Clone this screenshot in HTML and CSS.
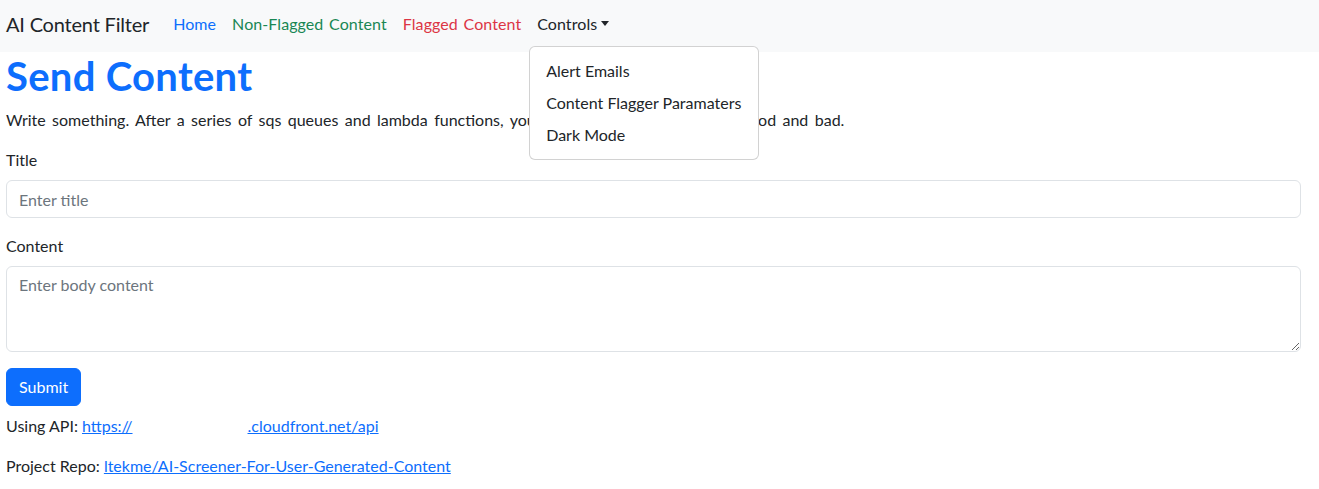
FILE: index.html
```html
<!DOCTYPE html>
<html lang="en">
<head>
<meta charset="utf-8">
<title>AI Content Filter</title>
<link rel="stylesheet" href="styles.css">
</head>
<body>
<nav class="navbar">
  <span class="brand">AI Content Filter</span>
  <ul class="nav">
    <li><a class="nav-link link-home">Home</a></li>
    <li><a class="nav-link link-green">Non-Flagged Content</a></li>
    <li><a class="nav-link link-red">Flagged Content</a></li>
    <li class="dropdown">
      <a class="nav-link link-dark toggle">Controls</a>
      <ul class="menu">
        <li class="menu-item">Alert Emails</li>
        <li class="menu-item">Content Flagger Paramaters</li>
        <li class="menu-item">Dark Mode</li>
      </ul>
    </li>
  </ul>
</nav>
<main class="main">
  <h1 class="title">Send Content</h1>
  <p class="lead">Write something. After a series of sqs queues and lambda functions, your content will be flagged as good and bad.</p>
  <div class="field">
    <label class="label">Title</label>
    <input class="control" type="text" placeholder="Enter title">
  </div>
  <div class="field">
    <label class="label">Content</label>
    <textarea class="control area" rows="3" placeholder="Enter body content"></textarea>
  </div>
  <button class="btn" type="button">Submit</button>
  <p class="info">Using API: <a class="link" href="#">https://<span class="gap"></span>.cloudfront.net/api</a></p>
  <p class="info">Project Repo: <a class="link" href="#">ltekme/AI-Screener-For-User-Generated-Content</a></p>
</main>
</body>
</html>
```
FILE: styles.css
```css
* { box-sizing: border-box; }
body {
  margin: 0;
  font-family: Lato, "Noto Sans", sans-serif;
  font-size: 16px;
  line-height: 24px;
  color: #212529;
  background: #fff;
}
.navbar {
  height: 52px;
  background: #f8f9fa;
  display: flex;
  align-items: center;
  padding: 0 6px 4px;
}
.brand {
  font-size: 20px;
  line-height: 30px;
  margin-right: 16px;
  letter-spacing: -0.2px;
  color: #212529;
}
.nav {
  list-style: none;
  margin: 0;
  padding: 0;
  display: flex;
}
.nav-link {
  display: block;
  padding: 8px;
  text-decoration: none;
  word-spacing: 1.5px;
  letter-spacing: 0.08px;
  cursor: pointer;
}
.link-home { color: #0d6efd; }
.link-green { color: #198754; }
.link-red { color: #dc3545; }
.link-dark { color: #212529; }
.toggle::after {
  content: "";
  display: inline-block;
  margin-left: 4px;
  vertical-align: 4px;
  border-top: 5px solid;
  border-right: 4px solid transparent;
  border-left: 4px solid transparent;
}
.dropdown { position: relative; }
.menu {
  position: absolute;
  top: 42px;
  left: 0;
  width: 230px;
  list-style: none;
  margin: 0;
  padding: 8px 0;
  background: #fff;
  border: 1px solid rgba(0,0,0,.175);
  border-radius: 6px;
  z-index: 10;
}
.menu-item {
  padding: 4px 16px;
  white-space: nowrap;
  color: #212529;
}
.main { padding: 0 18px 0 6px; }
.title {
  margin: 0 0 8px;
  font-size: 40px;
  line-height: 48px;
  font-weight: 700;
  letter-spacing: 0.3px;
  color: #0d6efd;
}
.lead { margin: 0 0 16px; word-spacing: 2.3px; }
.field { margin-bottom: 16px; }
.label { display: block; margin-bottom: 8px; }
.control {
  display: block;
  width: 100%;
  height: 38px;
  padding: 6px 12px;
  font: inherit;
  color: #212529;
  border: 1px solid #dee2e6;
  border-radius: 6px;
  background: #fff;
}
.control::placeholder { color: #6c757d; }
.area { height: 86px; resize: vertical; }
.btn {
  display: block;
  height: 38px;
  padding: 6px 12px;
  font: inherit;
  color: #fff;
  background: #0d6efd;
  border: 1px solid #0d6efd;
  border-radius: 6px;
  margin-bottom: 8px;
}
.info { margin: 0 0 16px; }
.link { color: #0d6efd; }
.gap { display: inline-block; width: 115px; }
```
